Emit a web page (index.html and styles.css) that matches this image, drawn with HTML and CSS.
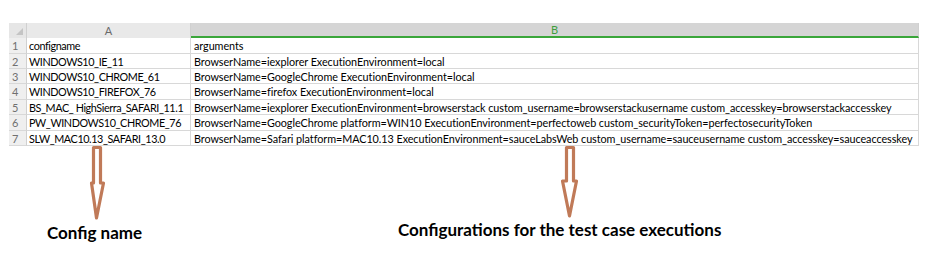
FILE: index.html
```html
<!DOCTYPE html>
<html lang="en">
<head>
    <meta charset="UTF-8">
    <title>Test configurations</title>
    <link rel="stylesheet" href="styles.css">
</head>
<body>
<div class="page">
    <!-- Spreadsheet -->
    <div class="sheet">
        <div class="corner"><span class="tri"></span></div>
        <div class="colhead">A</div>
        <div class="colhead selected">B</div>

        <div class="rownum">1</div>
        <div class="cell">configname</div>
        <div class="cell wide">arguments</div>

        <div class="rownum">2</div>
        <div class="cell">WINDOWS10_IE_11</div>
        <div class="cell wide">BrowserName=iexplorer ExecutionEnvironment=local</div>

        <div class="rownum">3</div>
        <div class="cell">WINDOWS10_CHROME_61</div>
        <div class="cell wide">BrowserName=GoogleChrome ExecutionEnvironment=local</div>

        <div class="rownum">4</div>
        <div class="cell">WINDOWS10_FIREFOX_76</div>
        <div class="cell wide">BrowserName=firefox ExecutionEnvironment=local</div>

        <div class="rownum">5</div>
        <div class="cell">BS_MAC_ HighSierra_SAFARI_11.1</div>
        <div class="cell wide">BrowserName=iexplorer ExecutionEnvironment=browserstack custom_username=browserstackusername custom_accesskey=browserstackaccesskey</div>

        <div class="rownum">6</div>
        <div class="cell">PW_WINDOWS10_CHROME_76</div>
        <div class="cell wide">BrowserName=GoogleChrome platform=WIN10 ExecutionEnvironment=perfectoweb custom_securityToken=perfectosecurityToken</div>

        <div class="rownum">7</div>
        <div class="cell">SLW_MAC10.13_SAFARI_13.0</div>
        <div class="cell wide">BrowserName=Safari platform=MAC10.13 ExecutionEnvironment=sauceLabsWeb custom_username=sauceusername custom_accesskey=sauceaccesskey</div>
    </div>

    <!-- Annotations -->
    <div class="notes">
        <div class="note note-a">Config name</div>
        <div class="note note-b">Configurations for the test case executions</div>
    </div>

    <svg class="arrow arrow-a" width="24" height="80" viewBox="0 0 24 80">
        <polygon points="7.5,3.5 14.5,3.5 14.5,39 17.5,39 10.5,74 5.5,39 7.5,39"/>
    </svg>
    <svg class="arrow arrow-b" width="24" height="80" viewBox="0 0 24 80">
        <polygon points="6.5,3.5 13.5,3.5 13.5,37 16.5,37 9.5,72 2.5,37 6.5,37"/>
    </svg>
</div>
</body>
</html>
```

FILE: styles.css
```css
body {
    margin: 0;
    background: #fff;
    font-family: Lato, "Liberation Sans", sans-serif;
}
.page {
    position: relative;
    width: 928px;
    height: 275px;
    padding-top: 23px;
    box-sizing: border-box;
    overflow: hidden;
}
.sheet {
    display: grid;
    grid-template-columns: 18px 164px 728px;
    grid-template-rows: 15px 16px 15px 15px 16px 15px 16px 15px;
    margin-left: 9px;
    width: 910px;
    font-size: 10.8px;
    color: #000;
}
.corner {
    position: relative;
    background: #e6e6e6;
    border-right: 1px solid #d0d0d0;
    box-sizing: border-box;
}
.corner .tri {
    position: absolute;
    right: 3px;
    bottom: 3px;
    width: 0;
    height: 0;
    border-left: 7px solid transparent;
    border-bottom: 7px solid #c4c4c4;
}
.colhead {
    background: #e9e9e9;
    color: #6a6a6a;
    text-align: center;
    line-height: 15px;
    font-size: 11px;
    border-right: 1px solid #d0d0d0;
    box-sizing: border-box;
}
.colhead.selected {
    background: #d5d5d5;
    color: #3e9e3e;
    border-bottom: 2px solid #3aa63a;
    line-height: 14px;
}
.rownum {
    background: #efefef;
    color: #707070;
    padding-left: 3px;
    border-bottom: 1px solid #d8d8d8;
    border-right: 1px solid #d0d0d0;
    box-sizing: border-box;
    display: flex;
    align-items: center;
    font-size: 11px;
}
.cell {
    padding-left: 2px;
    border-bottom: 1px solid #d8d8d8;
    border-right: 1px solid #d8d8d8;
    box-sizing: border-box;
    display: flex;
    align-items: center;
    white-space: nowrap;
    overflow: hidden;
    letter-spacing: -0.4px;
}
.cell.wide {
    padding-left: 3px;
    letter-spacing: -0.05px;
}
.notes {
    display: grid;
    grid-template-columns: 398px 1fr;
    margin-top: 73px;
    font-weight: bold;
    color: #000;
}
.note-a {
    padding-left: 47px;
    margin-top: 3px;
    font-size: 17px;
}
.note-b {
    font-size: 17px;
}
.arrow {
    position: absolute;
}
.arrow polygon {
    fill: #fff;
    stroke: #c07a58;
    stroke-width: 3.2;
    stroke-linejoin: round;
}
.arrow-a {
    left: 86px;
    top: 144px;
}
.arrow-b {
    left: 560px;
    top: 144px;
}
```
